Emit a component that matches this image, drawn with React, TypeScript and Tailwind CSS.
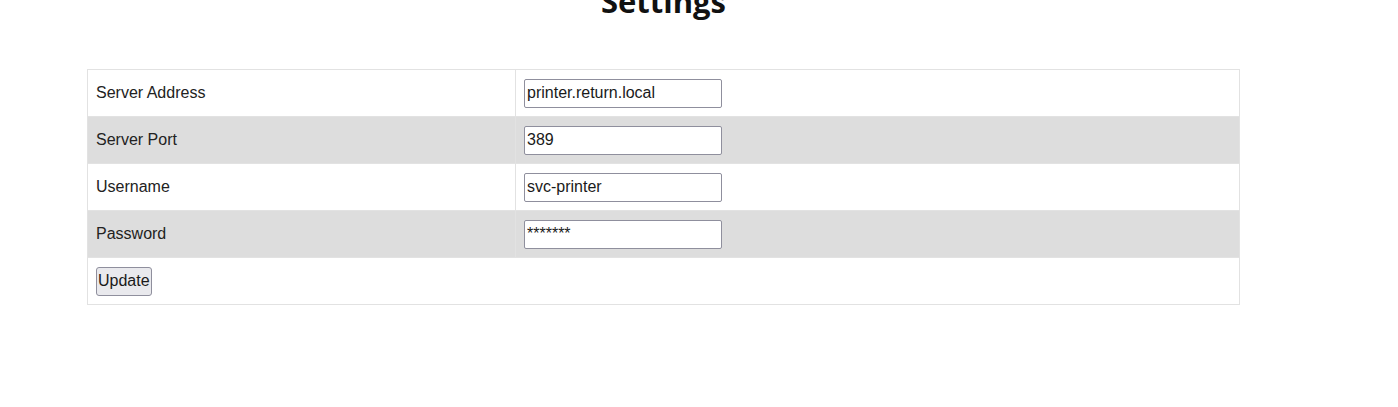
import React from 'react';

const rows = [
  { label: 'Server Address', value: 'printer.return.local', type: 'text' },
  { label: 'Server Port', value: '389', type: 'text' },
  { label: 'Username', value: 'svc-printer', type: 'text' },
  { label: 'Password', value: '*******', type: 'text' },
];

export default function App() {
  return (
    <div className="w-[1398px] h-[407px] bg-white overflow-hidden font-['Liberation_Sans',Arial,sans-serif] text-[#222]">
      <div className="ml-[87px] w-[1153px]">
        {/* heading sits partly above the top edge, as in the page */}
        <h1 className="-mt-[17px] h-[86px] text-center text-[31px] font-bold leading-[36px] text-[#111] font-['Open_Sans',sans-serif]">
          Settings
        </h1>
        <table className="w-full border-collapse border border-[#e2e2e2] text-[16px]">
          <tbody>
            {rows.map((row, i) => (
              <tr key={row.label} className={i % 2 === 1 ? 'bg-[#dddddd]' : 'bg-white'}>
                <td className="w-[428px] h-[47px] border border-[#e2e2e2] px-2 align-middle">{row.label}</td>
                <td className="h-[47px] border border-[#e2e2e2] px-2 align-middle">
                  <input
                    type={row.type}
                    defaultValue={row.value}
                    className="block w-[198px] h-[29px] border border-[#8f8f9d] rounded-[2px] bg-white px-[2px] text-[16px] text-[#1a1a1a] font-['Liberation_Sans',Arial,sans-serif] outline-none"
                  />
                </td>
              </tr>
            ))}
            <tr className="bg-white">
              <td colSpan={2} className="h-[47px] border border-[#e2e2e2] px-2 align-middle">
                <button className="block h-[29px] px-[1px] border border-[#8f8f9d] rounded-[3px] bg-[#e9e9ed] text-[16px] text-[#1a1a1a]">
                  Update
                </button>
              </td>
            </tr>
          </tbody>
        </table>
      </div>
    </div>
  );
}
